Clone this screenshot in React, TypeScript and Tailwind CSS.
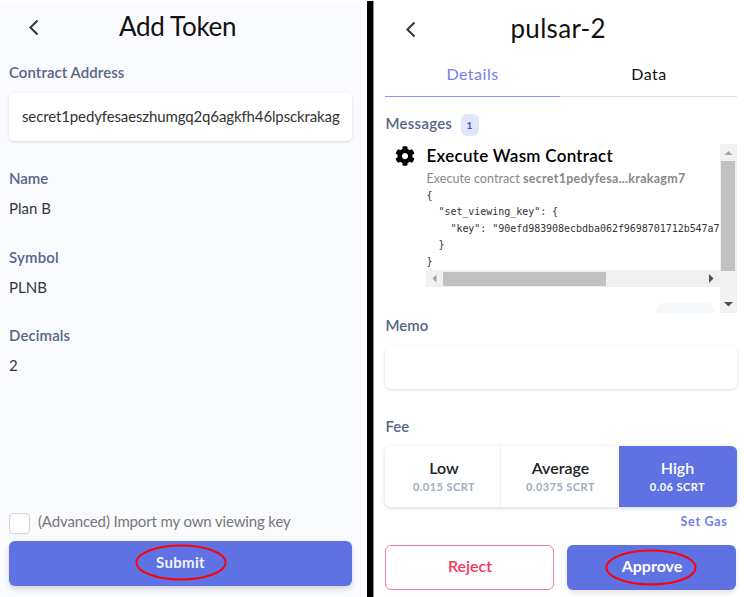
import React from "react";
import { FaCog } from "react-icons/fa";

const lato = "font-['Lato',sans-serif]";

function Chevron() {
  return (
    <svg width="11" height="17" viewBox="0 0 11 17" fill="none" className="block">
      <path d="M9.500 1.500 2.400 8.500l7.100 7" stroke="#32363b" strokeWidth="2" />
    </svg>
  );
}

function Ring({ className }: { className: string }) {
  return (
    <svg width="92" height="37" viewBox="0 0 92 37" fill="none" className={"absolute " + className}>
      <ellipse cx="46" cy="18.5" rx="44.6" ry="17" stroke="#fb0207" strokeWidth="2" />
    </svg>
  );
}

function Line({ className = "", children }: { className?: string; children: React.ReactNode }) {
  return (
    <div className={"h-[22px] whitespace-pre leading-[22px] " + className}>
      <span>{children}</span>
    </div>
  );
}

function AddToken() {
  return (
    <section className="mt-px flex h-[596px] w-[361px] flex-col bg-[#fafbfe] pl-[9px] text-[15px] text-[#32325d]">
      <header className="flex h-[52px] items-start">
        <div className="ml-[19px] mt-[18px] w-[91px]"><Chevron /></div>
        <h1 className="whitespace-pre text-[26px] leading-[50px] tracking-[-0.3px] text-[#111]">Add Token</h1>
      </header>
      <Line className="mt-[8px] font-semibold tracking-[0.06px] text-[#586488]">Contract Address</Line>
      <div className="mt-[10px] flex h-[48px] w-[343px] items-center rounded-[5px] bg-white pb-[2px] pl-[13px] tracking-[-0.125px] text-[#333] shadow-[0_1px_3px_rgba(50,50,93,0.15),0_1px_0_rgba(0,0,0,0.02)]">
        <Line>secret1pedyfesaeszhumgq2q6agkfh46lpsckrakag</Line>
      </div>
      <Line className="mt-[26px] font-semibold text-[#586488]">Name</Line>
      <Line className="mt-[8px] text-[#32363b]">Plan B</Line>
      <Line className="mt-[27px] font-semibold tracking-[0.2px] text-[#586488]">Symbol</Line>
      <Line className="mt-[8px] text-[#32363b]">PLNB</Line>
      <Line className="mt-[26px] font-semibold tracking-[0.1px] text-[#586488]">Decimals</Line>
      <Line className="mt-[8px] text-[#32363b]">2</Line>
      <label className="mt-auto flex h-[22px] items-center gap-[8px]">
        <span className="size-[21px] rounded-[4px] border border-[#cfd5dc] bg-white" />
        <Line className="mb-[4px] tracking-[-0.14px] text-[#777]">(Advanced) Import my own viewing key</Line>
      </label>
      <button className="relative mb-[11px] mt-[7px] flex h-[45px] w-[343px] shrink-0 items-center justify-center rounded-[6px] bg-[#5e72e4] pb-[3px] font-bold tracking-[0.3px] text-[#f1f3fd] shadow-[0_4px_6px_rgba(50,50,93,0.13),0_1px_3px_rgba(0,0,0,0.08)]">
        <Line>Submit</Line>
        <Ring className="left-[126px] top-[3px]" />
      </button>
    </section>
  );
}

function VerticalScrollbar() {
  return (
    <div className="flex w-[17px] flex-col items-center justify-between bg-[#f1f1f1]">
      <svg width="17" height="17" className="block"><path d="M4.500 11h8L8.500 7z" fill="#a3a3a3" /></svg>
      <div className="mb-auto h-[110px] w-[14px] bg-[#c1c1c1]" />
      <svg width="17" height="17" className="block"><path d="M4 6h9l-4.500 4.500z" fill="#505050" /></svg>
    </div>
  );
}

function HorizontalScrollbar() {
  return (
    <div className="flex h-[17px] w-[294px] items-center bg-[#f1f1f1]">
      <svg width="17" height="17" className="block"><path d="M10.500 4.500v8l-4-4z" fill="#a3a3a3" /></svg>
      <div className="h-[14px] w-[163px] bg-[#c1c1c1]" />
      <svg width="17" height="17" className="ml-auto block"><path d="M6 4v9l4.500-4.500z" fill="#505050" /></svg>
    </div>
  );
}

function Messages() {
  return (
    <div className="mt-[10px] flex h-[169px] w-[352px]">
      <div className="w-[335px] overflow-hidden pl-[10px]">
        <div className="flex gap-[11px]">
          <FaCog className="mt-[2px] size-[20px] shrink-0 text-black" />
          <div className="w-[294px]">
            <Line className="pl-px pt-px text-[17px] font-semibold tracking-[0.28px] text-black">Execute Wasm Contract</Line>
            <Line className="pl-px pt-[2px] text-[12.500px] tracking-[0.06px] text-[#888]">Execute contract <b className="tracking-[0.27px]">secret1pedyfesa...krakagm7</b></Line>
            <pre className="h-[82px] pl-px font-['DejaVu_Sans_Mono',monospace] text-[10px] leading-[16.400px] tracking-[-0.04px] text-[#333]">{`{
  "set_viewing_key": {
    "key": "90efd983908ecbdba062f9698701712b547a7
  }
}`}</pre>
            <HorizontalScrollbar />
          </div>
        </div>
        <div className="ml-[262px] mt-[17px] h-[20px] w-[56px] rounded-[7px] bg-[#f6f9fc] shadow-[0_0_3px_rgba(50,50,93,0.1)]" />
      </div>
      <VerticalScrollbar />
    </div>
  );
}

function Fee({ name, amount, active, className }: { name: string; amount: string; active?: boolean; className: string }) {
  return (
    <div className={"flex h-[61px] flex-col items-center pt-[11px] " + className}>
      <Line className="text-[16px] font-semibold">{name}</Line>
      <div className={"whitespace-pre text-[11px] font-bold leading-[16px] tracking-[0.45px] " + (active ? "text-white" : "text-[#a1acbb]")}>{amount}</div>
    </div>
  );
}

function Approval() {
  return (
    <section className="flex h-[597px] w-[371px] flex-col bg-white pl-[11px] text-[15px]">
      <header className="flex h-[54px] items-start">
        <div className="ml-[20px] mt-[21px] w-[106px]"><Chevron /></div>
        <h1 className="whitespace-pre text-[26px] leading-[57px] tracking-[0.3px] text-[#111]">pulsar-2</h1>
      </header>
      <nav className="flex h-[43px] w-[352px] text-center text-[16px] tracking-[0.5px]">
        <div className="flex w-[175px] justify-center border-b border-[#8c99ec] pl-px pt-[9px] text-[#7381e8]"><Line>Details</Line></div>
        <div className="flex w-[177px] justify-center border-b border-[#e2e2e4] pl-[2px] pt-[9px] text-[#111]"><Line>Data</Line></div>
      </nav>
      <div className="mt-[15px] flex h-[22px] items-center">
        <Line className="w-[76px] pl-px font-semibold tracking-[0.25px] text-[#586488]">Messages</Line>
        <span className="mt-[3px] h-[22px] w-[18px] rounded-[6px] bg-[#e2e6fb] text-center text-[10px] font-bold leading-[22px] text-[#3f50ec]">1</span>
      </div>
      <Messages />
      <Line className="mt-px pl-px font-semibold text-[#586488]">Memo</Line>
      <div className="mt-[10px] h-[43px] w-[352px] rounded-[6px] bg-white shadow-[0_1px_3px_rgba(50,50,93,0.17)]" />
      <Line className="mt-[26px] pl-px font-semibold text-[#586488]">Fee</Line>
      <div className="mt-[9px] flex w-[352px] rounded-[6px] bg-white text-[#212529] shadow-[0_1px_4px_rgba(50,50,93,0.2)]">
        <Fee name="Low" amount="0.015 SCRT" className="w-[116px] border-r border-[#f0f0f3] pl-[4px]" />
        <Fee name="Average" amount="0.0375 SCRT" className="w-[118px] pl-[2px]" />
        <Fee name="High" amount="0.06 SCRT" active className="w-[118px] rounded-r-[6px] bg-[#5e72e4] text-white" />
      </div>
      <div className="mt-[4px] flex w-[343px] justify-end text-[12.500px] font-bold tracking-[0.7px] text-[#6f80e8]"><Line>Set Gas</Line></div>
      <div className="mt-[12px] flex w-[351px] justify-between text-[16px] font-semibold">
        <button className="flex h-[45px] w-[169px] items-center justify-center rounded-[6px] border border-[#f77f97] pb-[3px] pl-[2px] text-[#f5365c]"><Line>Reject</Line></button>
        <button className="relative flex h-[45px] w-[169px] items-center justify-center rounded-[6px] bg-[#5e72e4] pb-[3px] pl-[2px] font-bold text-white shadow-[0_3px_5px_rgba(50,50,93,0.13)]">
          <Line>Approve</Line>
          <Ring className="left-[38px] top-[4px]" />
        </button>
      </div>
    </section>
  );
}

export default function App() {
  return (
    <main className={"flex h-[597px] w-[744px] overflow-hidden bg-white antialiased " + lato}>
      <AddToken />
      <div className="ml-[6px] mt-px h-[596px] w-[7px] border-r border-[#8a8a8a] bg-black" />
      <Approval />
    </main>
  );
}
